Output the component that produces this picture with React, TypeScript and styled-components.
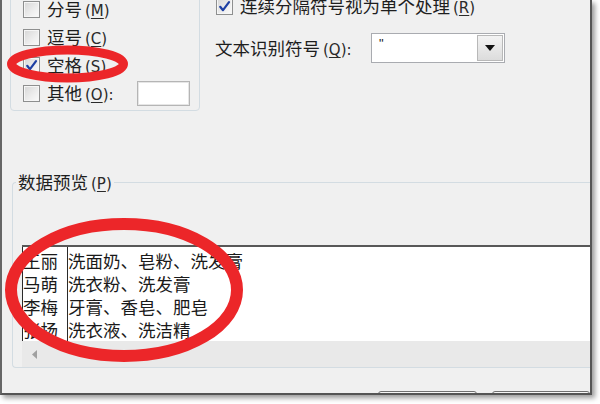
import React from "react";
import styled, { createGlobalStyle } from "styled-components";

const GlobalStyle = createGlobalStyle`
  html, body { margin: 0; padding: 0; background: #ffffff; }
  body {
    width: 600px;
    height: 404px;
    overflow: hidden;
    font-family: "Noto Sans CJK SC", "Noto Sans", sans-serif;
    color: #202020;
  }
`;

const Page = styled.div`
  position: relative;
  width: 600px;
  height: 404px;
  background: #ffffff;
`;

const Dialog = styled.div`
  width: 588px;
  height: 393px;
  background: #f0f0f0;
  border-left: 2px solid #666666;
  border-right: 2px solid #555555;
  border-bottom: 2px solid #555555;
  box-shadow: 3px 3px 5px rgba(0, 0, 0, 0.4);
  overflow: hidden;
  display: flex;
  flex-direction: column;
  & > * { flex-shrink: 0; }
`;

const TopSection = styled.div`
  display: flex;
  align-items: flex-start;
  height: 111px;
`;

const DelimiterGroup = styled.div`
  box-sizing: border-box;
  margin: -30px 0 0 8px;
  width: 190px;
  height: 141px;
  border: 1px solid #d3dce2;
  border-radius: 4px;
  padding: 24px 9px 0 12px;
  display: flex;
  flex-direction: column;
`;

const CheckRow = styled.div`
  display: flex;
  align-items: center;
  height: 28px;
  gap: 7px;
`;

const Box = styled.span`
  box-sizing: border-box;
  width: 17px;
  height: 17px;
  border: 1px solid #8e8f8f;
  background: linear-gradient(135deg, #d6d6d6 0%, #eeeeee 60%, #fafafa 100%);
  box-shadow: inset 0 0 0 1px #f6f6f6;
  display: flex;
  align-items: center;
  justify-content: center;
  flex-shrink: 0;
`;

const Label = styled.span`
  font-size: 17.5px;
  line-height: 1;
  white-space: nowrap;
  color: #1e1e1e;
`;

const Accel = styled.span`
  font-family: "DejaVu Sans", sans-serif;
  font-size: 15px;
  margin-left: 3px;
  color: #2a2a2a;
  u {
    text-decoration-thickness: 1px;
    text-underline-offset: 2px;
  }
`;

const OtherInput = styled.span`
  box-sizing: border-box;
  width: 53px;
  height: 25px;
  margin-left: auto;
  background: #ffffff;
  border: 1px solid #b5b5b5;
  box-shadow: inset 0 0 0 1px #e6e6e6;
`;

const RightOptions = styled.div`
  display: flex;
  flex-direction: column;
  margin: -8px 0 0 16px;
`;

const QualifierRow = styled.div`
  display: flex;
  align-items: center;
  height: 30px;
  margin-top: 13px;
  margin-left: -1px;
`;

const QualifierLabel = styled(Label)`
  width: 156px;
`;

const Combo = styled.div`
  box-sizing: border-box;
  width: 134px;
  height: 30px;
  border: 1px solid #a9abb0;
  background: #ffffff;
  display: flex;
`;

const ComboText = styled.span`
  flex: 1;
  font-family: "Liberation Sans", sans-serif;
  font-size: 13px;
  line-height: 1;
  padding: 3px 0 0 7px;
  color: #222;
`;

const DropButton = styled.span`
  box-sizing: border-box;
  width: 26px;
  border: 1px solid #b8b8b8;
  margin: 1px;
  background: linear-gradient(#f3f3f3, #dcdcdc);
  display: flex;
  align-items: center;
  justify-content: center;
`;

const PreviewFieldset = styled.fieldset`
  box-sizing: border-box;
  margin: 59px 0 0 10px;
  padding: 51px 0 0 9px;
  width: 600px;
  min-width: 0;
  border: 1px solid #d3dce2;
  border-right: none;
  border-radius: 4px;
`;

const Legend = styled.legend`
  margin-left: -6px;
  padding: 0 2px;
  font-size: 17.5px;
  line-height: 24px;
  height: 24px;
  color: #1e1e1e;
`;

const PreviewBox = styled.div`
  box-sizing: border-box;
  height: 96px;
  border-top: 2px solid #585858;
  background: #ffffff;
  display: flex;
`;

const NameColumn = styled.div`
  box-sizing: border-box;
  width: 46px;
  padding-top: 2px;
  border-left: 1px solid #2a2a2a;
  border-right: 1px solid #2a2a2a;
  overflow: hidden;
`;

const ItemColumn = styled.div`
  flex: 1;
  padding-top: 2px;
`;

const Cell = styled.div`
  height: 23px;
  line-height: 23px;
  font-size: 17.5px;
  white-space: nowrap;
  color: #1a1a1a;
`;

const ScrollBar = styled.div`
  height: 26px;
  background: #e9e9e9;
  display: flex;
  align-items: center;
  padding-left: 10px;
`;

const ButtonRow = styled.div`
  display: flex;
  height: 30px;
  margin-top: 23px;
  padding-left: 376px;
  gap: 15px;
`;

const DialogButton = styled.span`
  box-sizing: border-box;
  width: 110px;
  height: 30px;
  border: 1px solid #707070;
  border-radius: 3px;
  background: linear-gradient(#f6f6f6, #dddddd);
`;

const Overlay = styled.svg`
  position: absolute;
  top: 0;
  left: 0;
  width: 600px;
  height: 404px;
  pointer-events: none;
`;

function CheckBox({ checked }: { checked?: boolean }) {
  return (
    <Box>
      {checked && (
        <svg width="13" height="13" viewBox="0 0 13 13">
          <path d="M2.2 6.8 L5 10.2 L11 2.2" fill="none" stroke="#1d3fa3" strokeWidth="2.2" strokeLinecap="round" strokeLinejoin="round" />
        </svg>
      )}
    </Box>
  );
}

function Text({ text, k, colon }: { text: string; k: string; colon?: boolean }) {
  return (
    <>
      {text}
      <Accel>
        (<u>{k}</u>){colon ? ":" : ""}
      </Accel>
    </>
  );
}

const delimiters = [
  { text: "分号", k: "M", checked: false },
  { text: "逗号", k: "C", checked: false },
  { text: "空格", k: "S", checked: true },
];

const rows = [
  ["王丽", "洗面奶、皂粉、洗发膏"],
  ["马萌", "洗衣粉、洗发膏"],
  ["李梅", "牙膏、香皂、肥皂"],
  ["张扬", "洗衣液、洗洁精"],
];

export default function App() {
  return (
    <Page>
      <GlobalStyle />
      <Dialog>
        <TopSection>
          <DelimiterGroup>
            {delimiters.map((d) => (
              <CheckRow key={d.k}>
                <CheckBox checked={d.checked} />
                <Label>
                  <Text text={d.text} k={d.k} />
                </Label>
              </CheckRow>
            ))}
            <CheckRow>
              <CheckBox />
              <Label>
                <Text text="其他" k="O" colon />
              </Label>
              <OtherInput />
            </CheckRow>
          </DelimiterGroup>
          <RightOptions>
            <CheckRow>
              <CheckBox checked />
              <Label>
                <Text text="连续分隔符号视为单个处理" k="R" />
              </Label>
            </CheckRow>
            <QualifierRow>
              <QualifierLabel>
                <Text text="文本识别符号" k="Q" colon />
              </QualifierLabel>
              <Combo>
                <ComboText>"</ComboText>
                <DropButton>
                  <svg width="10" height="6" viewBox="0 0 10 6">
                    <path d="M0 0 H10 L5 6 Z" fill="#111" />
                  </svg>
                </DropButton>
              </Combo>
            </QualifierRow>
          </RightOptions>
        </TopSection>

        <PreviewFieldset>
          <Legend>
            <Text text="数据预览" k="P" />
          </Legend>
          <PreviewBox>
            <NameColumn>
              {rows.map((r) => (
                <Cell key={r[0]}>{r[0]}</Cell>
              ))}
            </NameColumn>
            <ItemColumn>
              {rows.map((r) => (
                <Cell key={r[0]}>{r[1]}</Cell>
              ))}
            </ItemColumn>
          </PreviewBox>
          <ScrollBar>
            <svg width="5" height="9" viewBox="0 0 5 9">
              <path d="M5 0 V9 L0 4.5 Z" fill="#a0a0a0" />
            </svg>
          </ScrollBar>
        </PreviewFieldset>

        <ButtonRow>
          <DialogButton />
          <DialogButton />
        </ButtonRow>
      </Dialog>

      <Overlay viewBox="0 0 600 404">
        <ellipse cx="67.5" cy="64" rx="56" ry="14" fill="none" stroke="#ec2629" strokeWidth="9" />
        <ellipse cx="124" cy="290" rx="113" ry="66" fill="none" stroke="#ec2629" strokeWidth="12" />
      </Overlay>
    </Page>
  );
}
